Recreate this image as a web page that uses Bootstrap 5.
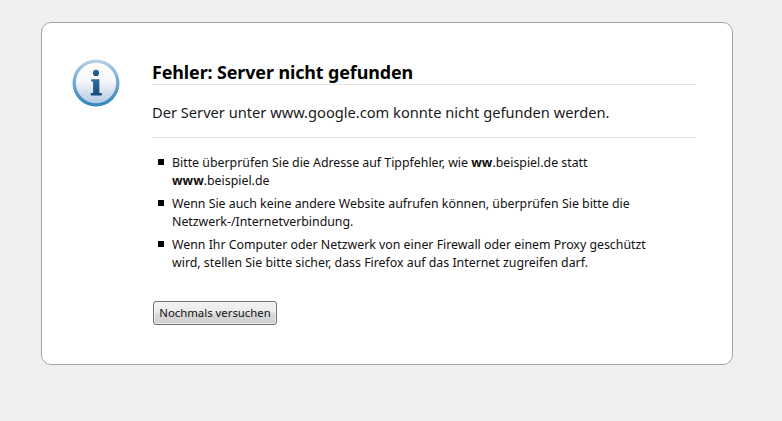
<!DOCTYPE html>
<html lang="de">
<head>
<meta charset="utf-8">
<title>Fehler: Server nicht gefunden</title>
<link rel="stylesheet" href="https://cdn.jsdelivr.net/npm/bootstrap@5.3.0/dist/css/bootstrap.min.css">
<style>
html,body{height:421px;overflow:hidden}
body{background:#f0f0f0;font-family:"Noto Sans","Open Sans",sans-serif;color:#000;padding:22px 49px 0 41px}
.err-box{width:692px;height:343px;background:#fff;border:1px solid #a4a4a4;border-radius:10px;padding:34px 36px 0 30px;gap:32px}
.err-icon{width:48px;height:48px;flex:none;margin-top:2px}
.err-body{flex:1;min-width:0}
.err-title{font-size:17.9px;line-height:24px;font-weight:700;margin:0;padding:3px 0 0;border-bottom:1px solid #e3e3e3;letter-spacing:-.1px}
.err-short{font-size:14.65px;line-height:20px;margin:0;padding:17px 0 15px;border-bottom:1px solid #e3e3e3;color:#1a1a1a}
.err-list{list-style:none;margin:16px 0 0;padding:0 36px 0 20px;font-size:12.35px;line-height:18px;color:#111}
.err-list li{position:relative;margin-bottom:5px}
.err-list li::before{content:"";position:absolute;left:-14px;top:5px;width:6px;height:6px;background:#000}
.err-btn{margin-top:24px;margin-left:1px;width:124px;height:24px;padding:0;font-size:11.35px;line-height:20px;color:#111;border:1px solid #6f6f6f;border-radius:3px;background:linear-gradient(#f2f2f2 0,#ebebeb 45%,#d9d9d9 55%,#cfcfcf 100%);box-shadow:inset 0 0 0 1px rgba(255,255,255,.6)}
</style>
</head>
<body>
<main class="err-box d-flex">
<svg class="err-icon" viewBox="0 0 50 50" aria-hidden="true">
<defs>
<linearGradient id="ring" x1="0" y1="0" x2="0" y2="1"><stop offset="0" stop-color="#b5d3e8"/><stop offset=".5" stop-color="#6fa8d2"/><stop offset="1" stop-color="#2f83bd"/></linearGradient>
<linearGradient id="face" x1="0" y1="0" x2="0" y2="1"><stop offset="0" stop-color="#ffffff"/><stop offset=".45" stop-color="#f6f7fb"/><stop offset="1" stop-color="#b4c9e4"/></linearGradient>
<linearGradient id="glyph" x1="0" y1="0" x2="0" y2="1"><stop offset="0" stop-color="#2f6c9f"/><stop offset="1" stop-color="#174a7c"/></linearGradient>
</defs>
<circle cx="25" cy="25" r="24.5" fill="url(#ring)"/>
<circle cx="25" cy="25" r="21" fill="url(#face)"/>
<circle cx="25" cy="14.500" r="3.200" fill="url(#glyph)"/>
<path d="M20 21h8.500v14.500h2.500V38H19.500v-2.500h2.500V23.500h-2z" fill="url(#glyph)"/>
</svg>
<div class="err-body">
<h1 class="err-title">Fehler: Server nicht gefunden</h1>
<p class="err-short">Der Server unter www.google.com konnte nicht gefunden werden.</p>
<ul class="err-list">
<li>Bitte überprüfen Sie die Adresse auf Tippfehler, wie <strong>ww</strong>.beispiel.de statt <strong>www</strong>.beispiel.de</li>
<li>Wenn Sie auch keine andere Website aufrufen können, überprüfen Sie bitte die Netzwerk-/Internetverbindung.</li>
<li>Wenn Ihr Computer oder Netzwerk von einer Firewall oder einem Proxy geschützt wird, stellen Sie bitte sicher, dass Firefox auf das Internet zugreifen darf.</li>
</ul>
<button type="button" class="btn err-btn">Nochmals versuchen</button>
</div>
</main>
<script src="https://cdn.jsdelivr.net/npm/bootstrap@5.3.0/dist/js/bootstrap.bundle.min.js"></script>
</body>
</html>
